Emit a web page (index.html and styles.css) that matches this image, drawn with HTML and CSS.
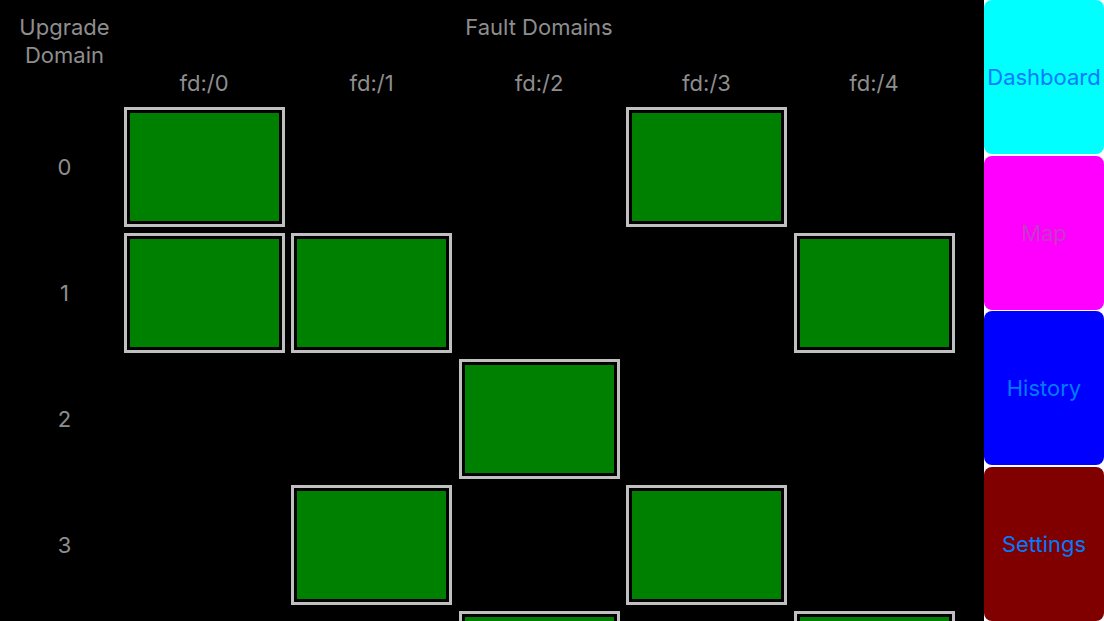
FILE: index.html
```html
<!DOCTYPE html>
<html lang="en">
<head>
    <meta charset="UTF-8">
    <meta name="viewport" content="width=device-width, initial-scale=1.0">
    <title>Cluster Map</title>
    <link rel="stylesheet" href="styles.css">
</head>
<body>
    <main class="board">
        <div class="head">
            <div class="ud-title">Upgrade<br>Domain</div>
            <div class="fd-title">Fault Domains</div>
            <div class="fd-label c1">fd:/0</div>
            <div class="fd-label c2">fd:/1</div>
            <div class="fd-label c3">fd:/2</div>
            <div class="fd-label c4">fd:/3</div>
            <div class="fd-label c5">fd:/4</div>
        </div>

        <div class="cells">
            <!-- upgrade domain 0 -->
            <div class="ud-label r1">0</div>
            <div class="node r1 c1"></div>
            <div class="node r1 c4"></div>

            <!-- upgrade domain 1 -->
            <div class="ud-label r2">1</div>
            <div class="node r2 c1"></div>
            <div class="node r2 c2"></div>
            <div class="node r2 c5"></div>

            <!-- upgrade domain 2 -->
            <div class="ud-label r3">2</div>
            <div class="node r3 c3"></div>

            <!-- upgrade domain 3 -->
            <div class="ud-label r4">3</div>
            <div class="node r4 c2"></div>
            <div class="node r4 c4"></div>

            <!-- upgrade domain 4, only its top edge is on screen -->
            <div class="node r5 c3"></div>
            <div class="node r5 c5"></div>
        </div>
    </main>

    <nav class="nav">
        <button class="nav-btn dashboard">Dashboard</button>
        <button class="nav-btn map">Map</button>
        <button class="nav-btn history">History</button>
        <button class="nav-btn settings">Settings</button>
    </nav>
</body>
</html>
```

FILE: styles.css
```css
body {
    margin: 0;
    height: 621px;
    overflow: hidden;
    display: flex;
    background: #000;
    font-family: Inter, "Noto Sans", sans-serif;
    font-size: 22px;
    color: #8e8e8e;
}

.board {
    width: 984px;
    height: 621px;
    overflow: hidden;
    padding-top: 13px;
    box-sizing: border-box;
    flex: none;
}

.head,
.cells {
    display: grid;
    grid-template-columns: 117px repeat(5, 161px);
    column-gap: 6.5px;
}

.head {
    grid-template-rows: 28px 28px 28px;
    line-height: 28px;
    text-align: center;
}

.ud-title {
    grid-column: 1;
    grid-row: 1 / 3;
    padding-left: 12px;
}

.fd-title {
    grid-column: 2 / 7;
    grid-row: 1;
}

.fd-label { grid-row: 3; }

.cells {
    margin-top: 10px;
    grid-template-rows: repeat(5, 120px);
    row-gap: 6px;
}

.ud-label {
    grid-column: 1;
    align-self: center;
    text-align: center;
    padding-left: 12px;
}

.node {
    border: 3px solid #c0c0c0;
    box-shadow: inset 0 0 0 3px #000; /* black ring between frame and fill */
    background: #008000;
}

.c1 { grid-column: 2; }
.c2 { grid-column: 3; }
.c3 { grid-column: 4; }
.c4 { grid-column: 5; }
.c5 { grid-column: 6; }

.r1 { grid-row: 1; }
.r2 { grid-row: 2; }
.r3 { grid-row: 3; }
.r4 { grid-row: 4; }
.r5 { grid-row: 5; }

.nav {
    width: 120px;
    flex: none;
    display: flex;
    flex-direction: column;
    gap: 1.5px;
    background: #fff;
}

.nav-btn {
    flex: 1;
    border: none;
    border-radius: 8px;
    padding: 0;
    font: inherit;
    color: #007aff;
}

.dashboard { background: #00ffff; }
.map { background: #ff00ff; color: rgba(128, 128, 128, 0.45); }
.history { background: #0000ff; }
.settings { background: #800000; }
```
